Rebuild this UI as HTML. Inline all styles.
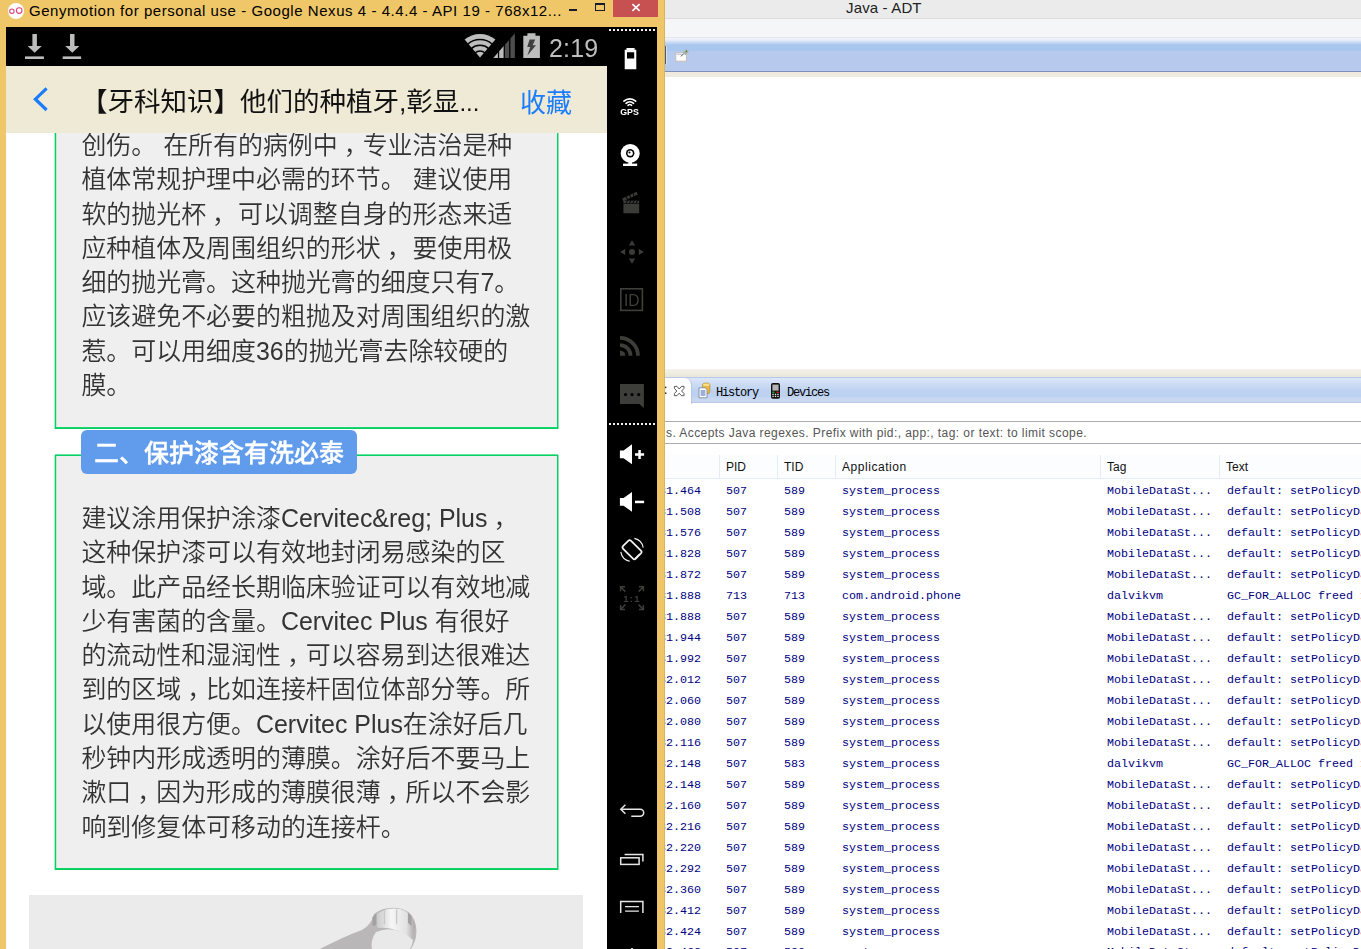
<!DOCTYPE html>
<html lang="zh-CN">
<head>
<meta charset="utf-8">
<title>Genymotion - Java ADT</title>
<style>
html,body{margin:0;padding:0;}
body{width:1361px;height:949px;overflow:hidden;position:relative;background:#fff;font-family:"Liberation Sans","Noto Sans CJK SC",sans-serif;}
*{box-sizing:border-box;}
.abs{position:absolute;}

/* ---------- ADT (Eclipse) window, behind ---------- */
#adt{position:absolute;left:665px;top:0;width:696px;height:949px;background:#fff;overflow:hidden;}
#adt .title{position:absolute;left:0;top:0;width:100%;height:19px;background:#ebebeb;border-bottom:1px solid #dcdcdc;}
#adt .title span{position:absolute;left:181px;top:-1px;font-size:15px;color:#222;letter-spacing:0.15px;white-space:nowrap;}
#adt .menu{position:absolute;left:0;top:19px;width:100%;height:19px;background:#f5f6f7;border-bottom:1px solid #e6e7e8;}
#adt .tbfade{position:absolute;left:0;top:38px;width:100%;height:7px;background:linear-gradient(#f3f5fb,#e6edfb 30%,#a9c6ee);}
#adt .toolbar{position:absolute;left:0;top:45px;width:100%;height:27px;background:linear-gradient(#a9c6ee 0,#a9c6ee 6px,#b7caee 6.5px,#b7caee 100%);border-bottom:1px solid #7b8fbd;}
#adt .beige1{position:absolute;left:0;top:72px;width:100%;height:5px;background:#efebe0;}
#adt .beige2{position:absolute;left:0;top:369px;width:100%;height:8px;background:linear-gradient(#f4f2ea,#e9e6da);}
#adt .tabs{position:absolute;left:0;top:377px;width:100%;height:26px;background:linear-gradient(#dde7f9 0,#cfdef6 5px,#bdd2f0 13px,#bdd2f0 19px,#c9d7f1 20px,#c9d7f1 100%);border-top:1px solid #b7c9ea;border-bottom:1px solid #b9c8e6;}
#adt .tabsel{position:absolute;left:-10px;top:378px;width:37px;height:26px;background:#fff;border-top-right-radius:7px;border-right:1px solid #b5c6e6;}
#adt .tabtxt{position:absolute;top:386px;font-family:"Liberation Mono",monospace;font-size:12px;line-height:14px;color:#000;white-space:nowrap;letter-spacing:-1.2px;}
#adt .filter{position:absolute;left:-10px;top:421px;width:720px;height:23px;border:1px solid #a9adb3;background:#fff;}
#adt .filter span{position:absolute;left:10px;top:4px;font-size:12px;line-height:14px;color:#555;white-space:nowrap;letter-spacing:0.43px;}
#adt .thead{position:absolute;left:0;top:455px;width:100%;height:24px;background:#fcfdfe;border-bottom:1px solid #e3ecf7;}
#adt .thead b{position:absolute;top:0;width:1px;height:23px;background:#e3ecf7;}
#adt .thead span{position:absolute;top:5px;line-height:14px;font-size:12px;color:#111;white-space:nowrap;font-weight:normal;}
#adt .row{position:absolute;left:0;width:100%;height:21px;font-family:"Liberation Mono",monospace;font-size:11.67px;color:#00007f;white-space:pre;line-height:21px;}
#adt .row i{position:absolute;top:0;font-style:normal;}

/* ---------- Genymotion window ---------- */
#geny{position:absolute;left:0;top:0;width:665px;height:960px;background:#efc768;overflow:hidden;}
#geny .wtitle{position:absolute;left:29px;top:1px;font-size:15px;line-height:20px;color:#000;white-space:nowrap;letter-spacing:0.55px;}
#geny .close{position:absolute;left:613px;top:0;width:45px;height:17px;background:#c75050;}
#screen{position:absolute;left:6px;top:27px;width:601px;height:940px;background:#fff;overflow:hidden;will-change:transform;}
#side{position:absolute;left:607px;top:27px;width:50px;height:940px;background:#000;will-change:transform;}
#status{z-index:6;position:absolute;left:0;top:0;width:601px;height:39px;background:#000;}
#status .time{position:absolute;left:543px;top:5.5px;font-size:25px;line-height:30px;color:#bebebe;letter-spacing:0.2px;}
#appbar{z-index:5;position:absolute;left:0;top:39px;width:601px;height:67px;background:#efead5;}
#appbar .t{position:absolute;left:75px;top:18px;font-size:26.5px;line-height:36px;color:#111;white-space:nowrap;}
#appbar .fav{position:absolute;left:514px;top:19px;font-size:26px;line-height:36px;color:#1a7cff;white-space:nowrap;}
.box{position:absolute;left:49px;width:503px;background:#efefef;border:1px solid #04d062;}
#box1{box-shadow:-1px 0 0 0 rgba(4,208,98,0.35), inset 1px 0 0 0 rgba(4,208,98,0.2), 1px 0 0 0 rgba(4,208,98,0.5), inset 0 -1px 0 0 rgba(4,208,98,0.9);}
#box2{box-shadow:-1px 0 0 0 rgba(4,208,98,0.35), inset 1px 0 0 0 rgba(4,208,98,0.2), 1px 0 0 0 rgba(4,208,98,0.5), 0 -1px 0 0 rgba(4,208,98,0.6), inset 0 -1px 0 0 rgba(4,208,98,0.95);}
.txt{position:absolute;left:75.4px;width:470px;font-size:24.95px;line-height:34.3px;color:#333;white-space:nowrap;font-weight:350;}
.c{position:relative;left:6px;}
.pill{-webkit-text-stroke:0.35px #fff;position:absolute;left:75px;top:403px;width:276px;height:44px;border-radius:6px;background:#609bec;color:#fff;font-weight:500;font-size:25px;line-height:46px;padding-left:13px;white-space:nowrap;}
#photo{position:absolute;left:23px;top:868px;width:554px;height:80px;background:#ebebeb;overflow:hidden;}
</style>
</head>
<body>

<!-- ================= ADT window ================= -->
<div id="adt">
  <div class="title"><span>Java - ADT</span></div>
  <div class="menu"></div>
  <div class="tbfade"></div>
  <div class="toolbar"></div>
  <div class="beige1"></div>
  <div class="beige2"></div>
  <div class="tabs"></div>
  <div class="tabsel"></div>
  <div class="tabtxt" style="left:51px">History</div>
  <div class="tabtxt" style="left:122px">Devices</div>
  <svg class="abs" style="left:0;top:378px" width="130" height="26" viewBox="665 378 130 26">
    <rect x="665" y="386.6" width="1.4" height="1.6" fill="#333"/><rect x="665" y="392.4" width="1.4" height="1.6" fill="#333"/>
    <path d="M674.4 386.4 H677 L679.2 389 L681.4 386.4 H684 V388.4 L681.6 391 L684 393.6 V395.7 H681.4 L679.2 393.2 L677 395.7 H674.4 V393.6 L676.8 391 L674.4 388.4 Z" fill="#fff" stroke="#5a5a5a" stroke-width="1"/>
    <!-- history icon -->
    <path d="M702.6 384.6 Q702.6 383 706.2 383 Q709.8 383 709.8 384.6 V392 Q709.8 393.8 706.2 393.8 Q702.6 393.8 702.6 392 Z" fill="#e9b83c" stroke="#b98a1e" stroke-width="0.7"/>
    <ellipse cx="706.2" cy="384.7" rx="3.3" ry="1.3" fill="#f9e08c"/>
    <path d="M699 387.8 H705.2 L707 389.6 V397.8 H699 Z" fill="#fff" stroke="#7a8aa8" stroke-width="0.9"/>
    <path d="M700.6 391 H705.4 M700.6 393 H705.4 M700.6 395 H705.4" stroke="#3b5fb5" stroke-width="1"/>
    <!-- phone icon -->
    <rect x="771" y="383" width="9" height="15.8" rx="1.8" fill="#111"/>
    <rect x="772.4" y="384.6" width="6.2" height="6" fill="#b4b4b4"/>
    <rect x="772.2" y="391.6" width="2.4" height="1.2" fill="#22c02a"/><rect x="776.4" y="391.6" width="2.4" height="1.2" fill="#e02626"/>
    <g fill="#fff"><rect x="772.3" y="393.8" width="1.4" height="1.1"/><rect x="774.8" y="393.8" width="1.4" height="1.1"/><rect x="777.3" y="393.8" width="1.4" height="1.1"/><rect x="772.3" y="395.8" width="1.4" height="1.1"/><rect x="774.8" y="395.8" width="1.4" height="1.1"/><rect x="777.3" y="395.8" width="1.4" height="1.1"/></g>
  </svg>
  <!-- toolbar handle + icon -->
  <div class="abs" style="left:0;top:46px;width:1px;height:18px;background:#4b5a78"></div>
  <div class="abs" style="left:1px;top:46px;width:1px;height:18px;background:#d3e0f7"></div>
  <svg class="abs" style="left:9px;top:47px" width="18" height="17" viewBox="674 47 18 17">
    <rect x="675.8" y="52.6" width="10.6" height="8.6" fill="#fdfdfd" stroke="#c2beb6" stroke-width="1"/>
    <path d="M676.6 54.2 H682" stroke="#9aa6bd" stroke-width="0.8"/>
    <path d="M681 56.4 L684.2 53.2" stroke="#3a3a3a" stroke-width="0.9"/>
    <path d="M682.4 52.8 L685.6 55.2 L688.8 51 L686.6 49.2 Z" fill="#a9b3a4"/>
    <circle cx="686.4" cy="51.4" r="0.8" fill="#4b7a4b"/>
  </svg>
  <div class="filter"><span>s. Accepts Java regexes. Prefix with pid:, app:, tag: or text: to limit scope.</span></div>
  <div class="thead">
    <b style="left:54px"></b><b style="left:112px"></b><b style="left:170px"></b><b style="left:435px"></b><b style="left:554px"></b>
    <span style="left:61px">PID</span><span style="left:119px">TID</span><span style="left:177px;letter-spacing:0.55px">Application</span><span style="left:442px">Tag</span><span style="left:561px">Text</span>
  </div>
  <div id="rows">
    <div class="row" style="top:481px"><i style="left:-6px">31.464</i><i style="left:61px">507</i><i style="left:119px">589</i><i style="left:177px">system_process</i><i style="left:442px">MobileDataSt...</i><i style="left:562px">default: setPolicyDataEnable</i></div>
    <div class="row" style="top:502px"><i style="left:-6px">31.508</i><i style="left:61px">507</i><i style="left:119px">589</i><i style="left:177px">system_process</i><i style="left:442px">MobileDataSt...</i><i style="left:562px">default: setPolicyDataEnable</i></div>
    <div class="row" style="top:523px"><i style="left:-6px">31.576</i><i style="left:61px">507</i><i style="left:119px">589</i><i style="left:177px">system_process</i><i style="left:442px">MobileDataSt...</i><i style="left:562px">default: setPolicyDataEnable</i></div>
    <div class="row" style="top:544px"><i style="left:-6px">31.828</i><i style="left:61px">507</i><i style="left:119px">589</i><i style="left:177px">system_process</i><i style="left:442px">MobileDataSt...</i><i style="left:562px">default: setPolicyDataEnable</i></div>
    <div class="row" style="top:565px"><i style="left:-6px">31.872</i><i style="left:61px">507</i><i style="left:119px">589</i><i style="left:177px">system_process</i><i style="left:442px">MobileDataSt...</i><i style="left:562px">default: setPolicyDataEnable</i></div>
    <div class="row" style="top:586px"><i style="left:-6px">31.888</i><i style="left:61px">713</i><i style="left:119px">713</i><i style="left:177px">com.android.phone</i><i style="left:442px">dalvikvm</i><i style="left:562px">GC_FOR_ALLOC freed 1</i></div>
    <div class="row" style="top:607px"><i style="left:-6px">31.888</i><i style="left:61px">507</i><i style="left:119px">589</i><i style="left:177px">system_process</i><i style="left:442px">MobileDataSt...</i><i style="left:562px">default: setPolicyDataEnable</i></div>
    <div class="row" style="top:628px"><i style="left:-6px">31.944</i><i style="left:61px">507</i><i style="left:119px">589</i><i style="left:177px">system_process</i><i style="left:442px">MobileDataSt...</i><i style="left:562px">default: setPolicyDataEnable</i></div>
    <div class="row" style="top:649px"><i style="left:-6px">31.992</i><i style="left:61px">507</i><i style="left:119px">589</i><i style="left:177px">system_process</i><i style="left:442px">MobileDataSt...</i><i style="left:562px">default: setPolicyDataEnable</i></div>
    <div class="row" style="top:670px"><i style="left:-6px">32.012</i><i style="left:61px">507</i><i style="left:119px">589</i><i style="left:177px">system_process</i><i style="left:442px">MobileDataSt...</i><i style="left:562px">default: setPolicyDataEnable</i></div>
    <div class="row" style="top:691px"><i style="left:-6px">32.060</i><i style="left:61px">507</i><i style="left:119px">589</i><i style="left:177px">system_process</i><i style="left:442px">MobileDataSt...</i><i style="left:562px">default: setPolicyDataEnable</i></div>
    <div class="row" style="top:712px"><i style="left:-6px">32.080</i><i style="left:61px">507</i><i style="left:119px">589</i><i style="left:177px">system_process</i><i style="left:442px">MobileDataSt...</i><i style="left:562px">default: setPolicyDataEnable</i></div>
    <div class="row" style="top:733px"><i style="left:-6px">32.116</i><i style="left:61px">507</i><i style="left:119px">589</i><i style="left:177px">system_process</i><i style="left:442px">MobileDataSt...</i><i style="left:562px">default: setPolicyDataEnable</i></div>
    <div class="row" style="top:754px"><i style="left:-6px">32.148</i><i style="left:61px">507</i><i style="left:119px">583</i><i style="left:177px">system_process</i><i style="left:442px">dalvikvm</i><i style="left:562px">GC_FOR_ALLOC freed 1</i></div>
    <div class="row" style="top:775px"><i style="left:-6px">32.148</i><i style="left:61px">507</i><i style="left:119px">589</i><i style="left:177px">system_process</i><i style="left:442px">MobileDataSt...</i><i style="left:562px">default: setPolicyDataEnable</i></div>
    <div class="row" style="top:796px"><i style="left:-6px">32.160</i><i style="left:61px">507</i><i style="left:119px">589</i><i style="left:177px">system_process</i><i style="left:442px">MobileDataSt...</i><i style="left:562px">default: setPolicyDataEnable</i></div>
    <div class="row" style="top:817px"><i style="left:-6px">32.216</i><i style="left:61px">507</i><i style="left:119px">589</i><i style="left:177px">system_process</i><i style="left:442px">MobileDataSt...</i><i style="left:562px">default: setPolicyDataEnable</i></div>
    <div class="row" style="top:838px"><i style="left:-6px">32.220</i><i style="left:61px">507</i><i style="left:119px">589</i><i style="left:177px">system_process</i><i style="left:442px">MobileDataSt...</i><i style="left:562px">default: setPolicyDataEnable</i></div>
    <div class="row" style="top:859px"><i style="left:-6px">32.292</i><i style="left:61px">507</i><i style="left:119px">589</i><i style="left:177px">system_process</i><i style="left:442px">MobileDataSt...</i><i style="left:562px">default: setPolicyDataEnable</i></div>
    <div class="row" style="top:880px"><i style="left:-6px">32.360</i><i style="left:61px">507</i><i style="left:119px">589</i><i style="left:177px">system_process</i><i style="left:442px">MobileDataSt...</i><i style="left:562px">default: setPolicyDataEnable</i></div>
    <div class="row" style="top:901px"><i style="left:-6px">32.412</i><i style="left:61px">507</i><i style="left:119px">589</i><i style="left:177px">system_process</i><i style="left:442px">MobileDataSt...</i><i style="left:562px">default: setPolicyDataEnable</i></div>
    <div class="row" style="top:922px"><i style="left:-6px">32.424</i><i style="left:61px">507</i><i style="left:119px">589</i><i style="left:177px">system_process</i><i style="left:442px">MobileDataSt...</i><i style="left:562px">default: setPolicyDataEnable</i></div>
    <div class="row" style="top:942px"><i style="left:-6px">32.468</i><i style="left:61px">507</i><i style="left:119px">589</i><i style="left:177px">system_process</i><i style="left:442px">MobileDataSt...</i><i style="left:562px">default: setPolicyDataEnable</i></div>
  </div>
</div>

<!-- ================= Genymotion window ================= -->
<div id="geny">
  <div class="wtitle">Genymotion for personal use - Google Nexus 4 - 4.4.4 - API 19 - 768x12...</div>
  <svg class="abs" style="left:7px;top:2px" width="18" height="18" viewBox="0 0 18 18"><circle cx="9" cy="9" r="8" fill="#fff"/><circle cx="4.9" cy="9.2" r="2.2" fill="none" stroke="#e0457b" stroke-width="1.1"/><circle cx="12.2" cy="8.6" r="2.8" fill="none" stroke="#e0457b" stroke-width="1.1"/></svg>
  <div class="abs" style="left:569px;top:9px;width:8px;height:2px;background:#1a1a2e"></div>
  <div class="abs" style="left:595px;top:3px;width:10px;height:8px;border:1px solid #1a1a2e;border-top-width:2px"></div>
  <div class="close"><svg class="abs" style="left:18px;top:3px" width="10" height="9" viewBox="0 0 10 9"><path d="M1.4 1.2 L8.6 7.8 M8.6 1.2 L1.4 7.8" stroke="#fff" stroke-width="1.6" fill="none"/></svg></div>
  <div class="abs" style="left:664px;top:0;width:1px;height:960px;background:#d9b35e"></div>

  <div id="screen">
    <div id="status">
      <svg class="abs" style="left:14px;top:3px" width="70" height="34" viewBox="20 30 70 34">
        <g fill="#bdbdbd"><rect x="32.4" y="34" width="4.5" height="13"/><path d="M27.6 46 H41.8 L34.7 52.8 Z"/><rect x="25" y="56.4" width="18.9" height="2.6"/>
        <rect x="70" y="34" width="4.5" height="13"/><path d="M65.2 46 H79.4 L72.3 52.8 Z"/><rect x="62.7" y="56.4" width="18.4" height="2.6"/></g>
      </svg>
      <svg class="abs" style="left:457px;top:5px" width="80" height="28" viewBox="0 0 80 28">
        <!-- wifi -->
        <path d="M17 25.4 L1.6 7.6 A24 24 0 0 1 32.4 7.6 Z" fill="#bdbdbd"/>
        <g fill="none" stroke="#000" stroke-width="1.5"><path d="M4.6 12.2 A19 19 0 0 1 29.4 12.2"/><path d="M8.2 16.6 A13.4 13.4 0 0 1 25.8 16.6"/><path d="M12 21 A7.6 7.6 0 0 1 22 21"/></g>
        <!-- signal -->
        <path d="M30.4 25.9 L51.9 1.2 V25.9 Z" fill="#4d4d4d"/>
        <path d="M30.4 25.9 L41.2 13.5 V25.9 Z" fill="#bdbdbd"/>
        <g fill="#000"><rect x="34.9" y="0" width="1.3" height="28"/><rect x="40.6" y="0" width="1.3" height="28"/><rect x="46.1" y="0" width="1.3" height="28"/></g>
        <!-- battery -->
        <path d="M60.3 3.8 H64.4 V1.2 H72.5 V3.8 H76.9 V25.9 H60.3 Z" fill="#bdbdbd"/>
        <path d="M66.6 7.6 H72.2 L69.6 13.2 H73 L64.4 23.4 L67.2 15 H64.2 Z" fill="#404040"/>
      </svg>
      <div class="time">2:19</div>
    </div>
    <div id="appbar">
      <svg class="abs" style="left:24px;top:18px" width="22" height="30" viewBox="0 0 22 30"><path d="M16.6 4.4 L5.4 15.2 L16.6 26" fill="none" stroke="#1a7cff" stroke-width="3.2"/></svg>
      <div class="t">【牙科知识】他们的种植牙,彰显<span style="font-family:'Liberation Sans',sans-serif;font-size:24px">...</span></div>
      <div class="fav">收藏</div>
    </div>

    <div class="box" id="box1" style="top:80px;height:322px;"></div>
    <div class="txt" style="top:101px;">创伤。 在所有的病例中<span class="c">，</span>专业洁治是种<br>植体常规护理中必需的环节。 建议使用<br>软的抛光杯<span class="c">，</span> 可以调整自身的形态来适<br>应种植体及周围组织的形状<span class="c">，</span> 要使用极<br>细的抛光膏。这种抛光膏的细度只有7。<br>应该避免不必要的粗抛及对周围组织的激<br>惹。可以用细度36的抛光膏去除较硬的<br>膜。</div>

    <div class="box" id="box2" style="top:428px;height:415px;"></div>
    <div class="pill">二、保护漆含有洗必泰</div>
    <div class="txt" style="top:474px;">建议涂用保护涂漆Cervitec&amp;reg; Plus<span class="c">，</span><br>这种保护漆可以有效地封闭易感染的区<br>域。此产品经长期临床验证可以有效地减<br>少有害菌的含量。Cervitec Plus 有很好<br>的流动性和湿润性<span class="c">，</span>可以容易到达很难达<br>到的区域<span class="c">，</span>比如连接杆固位体部分等。所<br>以使用很方便。Cervitec Plus在涂好后几<br>秒钟内形成透明的薄膜。涂好后不要马上<br>漱口<span class="c">，</span>因为形成的薄膜很薄<span class="c">，</span>所以不会影<br>响到修复体可移动的连接杆。</div>

    <div id="photo"><svg class="abs" style="left:0;top:0;filter:blur(0.7px)" width="554" height="60" viewBox="29 895 554 60">
      <defs><linearGradient id="mg" x1="0" y1="0" x2="1" y2="0"><stop offset="0" stop-color="#bdbbbb"/><stop offset="0.45" stop-color="#f6f6f6"/><stop offset="0.8" stop-color="#e2e2e2"/><stop offset="1" stop-color="#a9a7a7"/></linearGradient></defs>
      <path d="M318 950 Q345 936 362 930 Q372 924 374 914 Q386 905 402 909 Q414 913 416 926 Q418 940 410 950 Z" fill="#b9b7b7"/>
      <path d="M372 918 Q384 906 400 909 Q414 913 415 927 L413 940 Q396 926 378 928 Z" fill="url(#mg)"/>
      <path d="M376 932 Q396 924 413 940 Q412 948 408 950 H372 Q370 940 376 932 Z" fill="#e9e9e9"/>
      <path d="M372.5 917 l4 -3.4 v11.4 l-4 1 Z M408 912.6 l3.6 3.4 v10 l-3.6 -3 Z" fill="#a3a1a1"/>
      <path d="M384.4 910.4 v14 M396.6 909.6 v14.6" stroke="#c9c9c9" stroke-width="1.4"/>
    </svg></div>
  </div>

  <div id="side"><svg class="abs" style="left:0;top:0" width="50" height="930" viewBox="607 27 50 930">
    <g fill="#f2f2f2"><rect x="609" y="29" width="2" height="2"/><rect x="613" y="29" width="2" height="2"/><rect x="617" y="29" width="2" height="2"/><rect x="621" y="29" width="2" height="2"/><rect x="625" y="29" width="2" height="2"/><rect x="629" y="29" width="2" height="2"/><rect x="633" y="29" width="2" height="2"/><rect x="637" y="29" width="2" height="2"/><rect x="641" y="29" width="2" height="2"/><rect x="645" y="29" width="2" height="2"/><rect x="649" y="29" width="2" height="2"/><rect x="653" y="29" width="2" height="2"/><rect x="609" y="423" width="2" height="2"/><rect x="613" y="423" width="2" height="2"/><rect x="617" y="423" width="2" height="2"/><rect x="621" y="423" width="2" height="2"/><rect x="625" y="423" width="2" height="2"/><rect x="629" y="423" width="2" height="2"/><rect x="633" y="423" width="2" height="2"/><rect x="637" y="423" width="2" height="2"/><rect x="641" y="423" width="2" height="2"/><rect x="645" y="423" width="2" height="2"/><rect x="649" y="423" width="2" height="2"/><rect x="653" y="423" width="2" height="2"/></g>
    <!-- battery -->
    <path d="M624.7 49.7 H626.5 V47.9 H634.6 V49.7 H636.3 V69.2 H624.7 Z M627 52.3 V58.4 H634.2 V52.3 Z" fill="#fff" fill-rule="evenodd"/>
    <!-- gps -->
    <g fill="none" stroke="#fff" stroke-width="1.6" stroke-linecap="round"><path d="M623.9 101.2 A8.6 8.6 0 0 1 635.7 101.2"/><path d="M626 103.3 A5.6 5.6 0 0 1 633.6 103.3"/><path d="M628 105.3 A2.8 2.8 0 0 1 631.6 105.3"/></g>
    <text x="629.6" y="115" text-anchor="middle" font-family="Liberation Sans, sans-serif" font-weight="bold" font-size="8.8" fill="#fff" letter-spacing="0.1">GPS</text>
    <!-- webcam -->
    <circle cx="630.2" cy="153.4" r="9.5" fill="#fff"/><circle cx="630.2" cy="153.2" r="4.2" fill="#000"/><circle cx="630.2" cy="153.2" r="2.6" fill="#fff"/><circle cx="629.5" cy="152.4" r="1" fill="#000"/>
    <rect x="628.4" y="162" width="3.6" height="2.5" fill="#fff"/><rect x="623" y="163.6" width="14.2" height="2.4" fill="#fff"/>
    <!-- clapper -->
    <g fill="#3b3b38"><rect x="623.4" y="203.6" width="15.8" height="9.7"/>
      <path d="M623.4 200.6 H639.2 V203 H623.4 Z"/>
      <path d="M622.2 198.6 L636.6 191.8 L637.8 194.4 L623.4 201.2 Z"/></g>
    <g stroke="#000" stroke-width="1"><path d="M626 203.2 l1.6 -2.8 M629.4 203.2 l1.6 -2.8 M632.8 203.2 l1.6 -2.8 M636.2 203.2 l1.6 -2.8"/><path d="M626.2 196.4 l1.2 3 M629.6 194.8 l1.2 3 M633 193.2 l1.2 3"/></g>
    <!-- dpad -->
    <g fill="#3b3b38"><circle cx="632" cy="251.9" r="3"/><path d="M632 240.2 L635.2 245.4 H628.8 Z"/><path d="M632 263.8 L635.2 258.6 H628.8 Z"/><path d="M620.2 251.9 L625.2 248.7 V255.1 Z"/><path d="M643.8 251.9 L638.8 248.7 V255.1 Z"/></g>
    <!-- ID -->
    <rect x="620.8" y="288.8" width="21.6" height="21.6" fill="none" stroke="#3f3f3b" stroke-width="1.6"/>
    <text x="631.8" y="305.7" text-anchor="middle" font-family="Liberation Sans, sans-serif" font-size="15.6" fill="#3f3f3b">ID</text>
    <!-- rss -->
    <g fill="none" stroke="#3d3d39" stroke-width="3.7"><path d="M620 337.8 A18 18 0 0 1 638 355.8"/><path d="M620 345.2 A10.6 10.6 0 0 1 630.6 355.8"/></g>
    <path d="M620 350.4 A5.4 5.4 0 0 1 625.4 355.8 H620 Z" fill="#3d3d39"/>
    <!-- sms -->
    <path d="M620 384 H643.9 V408.1 L639.4 404.1 H620 Z" fill="#3d3d39"/>
    <g fill="#000"><circle cx="625.5" cy="394.6" r="1.6"/><circle cx="632" cy="394.6" r="1.6"/><circle cx="638.7" cy="394.6" r="1.6"/></g>
    <!-- vol+ -->
    <path d="M619.9 450.6 H623.6 L632 444.2 V464.3 L623.6 458.3 H619.9 Z" fill="#fff"/>
    <path d="M635 453.2 h3.3 v-3.3 h2.5 v3.3 h3.3 v2.5 h-3.3 v3.3 h-2.5 v-3.3 h-3.3 Z" fill="#fff"/>
    <!-- vol- -->
    <path d="M619.9 498 H623.6 L632 491.9 V511.8 L623.6 505.7 H619.9 Z" fill="#fff"/>
    <rect x="635" y="500.7" width="9.1" height="2.5" fill="#fff"/>
    <!-- rotate -->
    <g fill="none" stroke="#f4f4f4">
      <rect x="626.4" y="540.8" width="11.2" height="17.9" rx="2" stroke-width="1.7" transform="rotate(-45 632 549.7)"/>
      <path d="M634.4 538.4 A11.6 11.6 0 0 1 643.2 547.6" stroke-width="1.1"/>
      <path d="M629.8 561.2 A11.6 11.6 0 0 1 620.8 551.8" stroke-width="1.1"/>
      <path d="M634.6 558.4 l5 -5" stroke-width="0.8"/>
    </g>
    <!-- 1:1 -->
    <g stroke="#3d3d39" stroke-width="1.5" fill="none"><path d="M620.6 591.2 v-4.4 h4.4 M620.8 587 l4.6 4.6"/><path d="M643.4 591.2 v-4.4 h-4.4 M643.2 587 l-4.6 4.6"/><path d="M620.6 605 v4.4 h4.4 M620.8 609.2 l4.6 -4.6"/><path d="M643.4 605 v4.4 h-4.4 M643.2 609.2 l-4.6 -4.6"/></g>
    <text x="632" y="601.6" text-anchor="middle" font-family="Liberation Sans, sans-serif" font-weight="bold" font-size="9.5" fill="#3d3d39" letter-spacing="1.2">1:1</text>
    <!-- back -->
    <g fill="none" stroke="#e6e6e6" stroke-width="1.5"><path d="M621 809.3 H640.2 A3.5 3.5 0 0 1 640.2 816.3 H631.3"/><path d="M625.4 804.8 L620.8 809.3 L625.4 813.8"/></g>
    <!-- recent -->
    <g fill="none" stroke="#e6e6e6" stroke-width="1.5"><rect x="620.7" y="857.8" width="18.4" height="6.6"/><path d="M624.6 854.4 H642.9 V861.4"/></g>
    <!-- menu -->
    <g fill="none" stroke="#e6e6e6" stroke-width="1.5"><path d="M620.7 913 V901.6 H642.9 V913"/><path d="M625.1 906.6 H638.9 M625.1 911.1 H638.9" stroke-width="1.3"/></g>
    <rect x="631" y="948" width="2" height="2" fill="#ccc"/>
  </svg></div>
</div>

</body>
</html>
